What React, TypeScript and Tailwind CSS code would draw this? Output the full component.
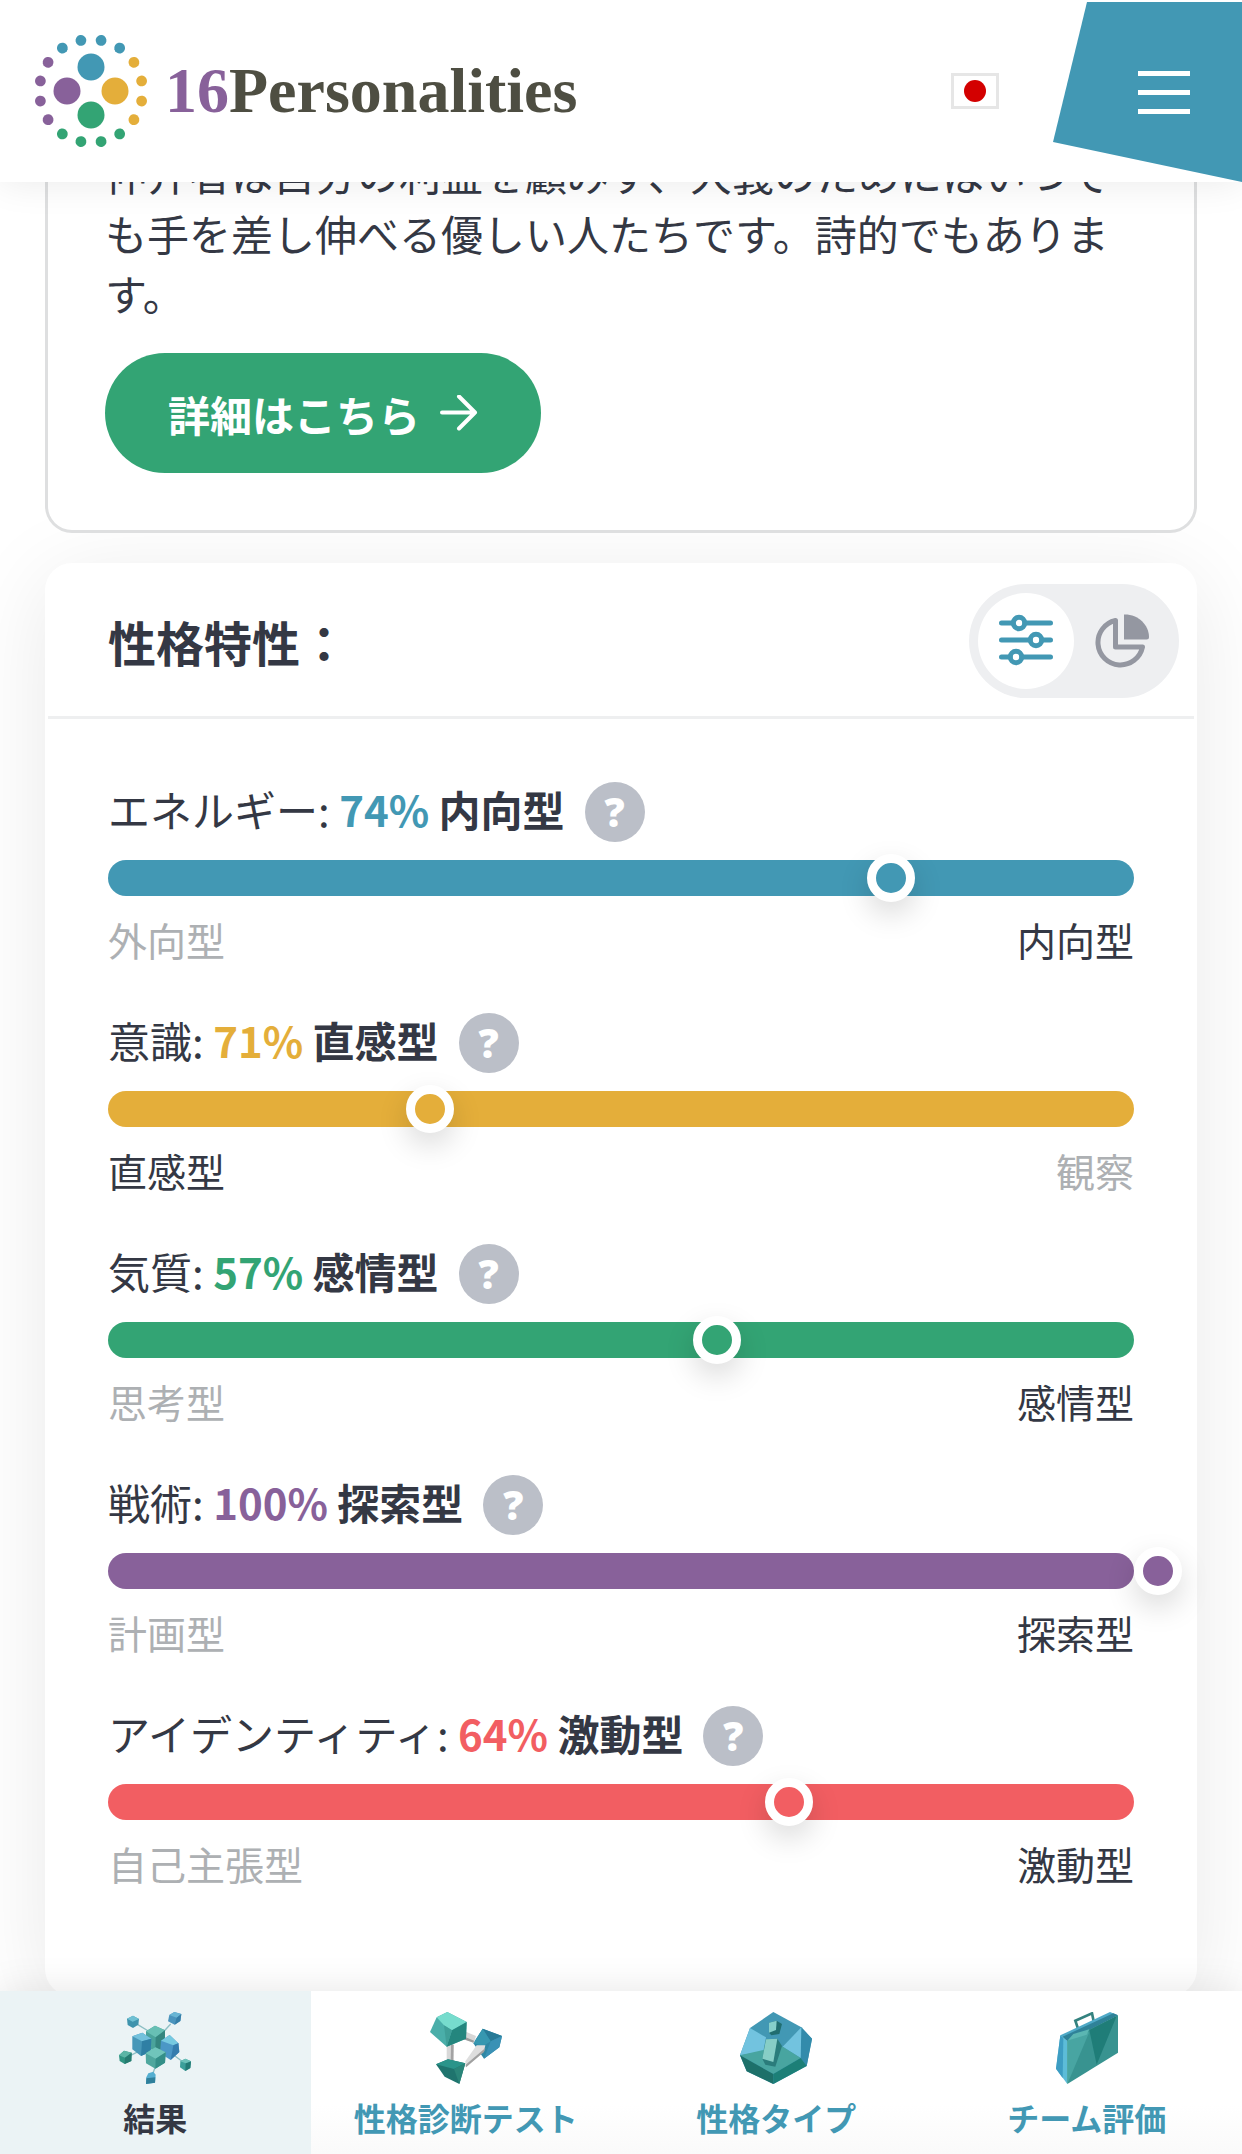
import React, { useState } from "react"
import clsx from "clsx"

type Trait = {
  name: string
  percent: number
  result: string
  left: string
  right: string
  position: number
  fill: string
  text: string
}

const traits: Trait[] = [
  {
    name: "エネルギー",
    percent: 74,
    result: "内向型",
    left: "外向型",
    right: "内向型",
    position: 74,
    fill: "bg-[#4298b4]",
    text: "text-[#4298b4]"
  },
  {
    name: "意識",
    percent: 71,
    result: "直感型",
    left: "直感型",
    right: "観察",
    position: 29,
    fill: "bg-[#e4ae3a]",
    text: "text-[#e4ae3a]"
  },
  {
    name: "気質",
    percent: 57,
    result: "感情型",
    left: "思考型",
    right: "感情型",
    position: 57,
    fill: "bg-[#33a474]",
    text: "text-[#33a474]"
  },
  {
    name: "戦術",
    percent: 100,
    result: "探索型",
    left: "計画型",
    right: "探索型",
    position: 100,
    fill: "bg-[#88619a]",
    text: "text-[#88619a]"
  },
  {
    name: "アイデンティティ",
    percent: 64,
    result: "激動型",
    left: "自己主張型",
    right: "激動型",
    position: 64,
    fill: "bg-[#f25e62]",
    text: "text-[#f25e62]"
  }
]

const LOGO_COLORS = ["#4298b4", "#e4ae3a", "#33a474", "#88619a"]

const LogoMark = () => (
  <svg className="size-[116px] shrink-0" viewBox="-58 -58 116 116" aria-hidden="true">
    {LOGO_COLORS.map((color, i) => (
      <g key={color} fill={color} transform={`rotate(${i * 90})`}>
        <circle cx="0" cy="-24" r="13.5" />
        {[-33.75, -11.25, 11.25, 33.75].map((angle) => (
          <circle key={angle} cx="0" cy="-51.6" r="5.4" transform={`rotate(${angle})`} />
        ))}
      </g>
    ))}
  </svg>
)

const ArrowIcon = () => (
  <svg
    className="h-[37px] w-[38px]"
    viewBox="0 0 38 37"
    fill="none"
    stroke="currentColor"
    strokeWidth="4"
    strokeLinecap="round"
    strokeLinejoin="round"
    aria-hidden="true"
  >
    <path d="M2 17.500H35M19 1.500L35 17.500L19 33.500" />
  </svg>
)

const SlidersIcon = () => (
  <svg
    className="size-[54px]"
    viewBox="0 0 54 54"
    fill="none"
    stroke="currentColor"
    strokeWidth="5"
    strokeLinecap="round"
    aria-hidden="true"
  >
    <path d="M2.5 9H14M26 9H51.5M2.5 26H31M43 26H51.5M2.5 43H11M23 43H51.5" />
    <circle cx="20" cy="9" r="5.7" />
    <circle cx="37" cy="26" r="5.7" />
    <circle cx="17" cy="43" r="5.7" />
  </svg>
)

const PieIcon = () => (
  <svg className="size-[54px]" viewBox="0 0 54 54" aria-hidden="true">
    <path
      d="M20.5 6.500A22.500 22.500 0 1 0 47.500 33H20.500Z"
      fill="none"
      stroke="currentColor"
      strokeWidth="5"
      strokeLinejoin="round"
    />
    <path d="M29 0.5C43 0 54 11 54 23Q54 25.500 51.500 25.500H29Z" fill="currentColor" />
  </svg>
)

const ResultsIcon = () => (
  <svg className="size-[72px]" viewBox="57 36 216 216" aria-hidden="true">
    <g stroke="#8dbfc4" strokeWidth="4">
      <path d="M112 73L150 96M212 72L190 96M92 166L116 154M222 166L246 184M166 200L158 222" />
    </g>
    <path d="M81 56L99 47L117 57L115 74L99 84L83 75Z" fill="#3f93ad" />
    <path d="M81 56L99 47L117 57L98 65Z" fill="#6fc0d3" />
    <path d="M208 45L223 36L244 42L241 63L224 74L204 64Z" fill="#4b94bd" />
    <path d="M208 45L223 36L244 42L230 53Z" fill="#69b5d4" />
    <path d="M230 53L244 42L241 63L224 74Z" fill="#357ea8" />
    <path d="M57 166L72 152L95 158L94 183L74 192L59 183Z" fill="#2f9482" />
    <path d="M57 166L72 152L95 158L75 173Z" fill="#5bb5a5" />
    <path d="M75 173L95 158L94 183L74 192Z" fill="#257b70" />
    <path d="M241 184L256 176L273 184L271 204L256 213L240 202Z" fill="#3c9f9a" />
    <path d="M257 190L273 184L271 204L256 213Z" fill="#237a75" />
    <path d="M241 184L256 176L273 184L257 190Z" fill="#6cc1b9" />
    <path d="M145 220L160 215L167 224L165 248L138 252L139 232Z" fill="#55aed0" />
    <path d="M139 235L166 232L165 248L138 252Z" fill="#2f7f9b" />
    <path d="M138 94L165 77L195 91L194 145L165 154L138 140Z" fill="#4aa39b" />
    <path d="M138 94L165 77L195 91L167 112Z" fill="#67bfb4" />
    <path d="M167 112L195 91L194 145L166 152Z" fill="#34867f" />
    <path d="M97 109L127 98L154 116L152 155L123 168L97 148Z" fill="#4797b8" />
    <path d="M97 109L127 98L154 116L126 124Z" fill="#73c1dc" />
    <path d="M126 124L154 116L152 155L123 168Z" fill="#2f7fa4" />
    <path d="M183 122L209 105L235 130L238 156L212 180L180 160Z" fill="#4b97c6" />
    <path d="M183 122L209 105L235 130L220 136Z" fill="#76c9e0" />
    <path d="M220 136L235 130L238 156L212 180Z" fill="#347cad" />
    <path d="M137 160L166 142L197 157L195 188L166 206L138 190Z" fill="#4fa79e" />
    <path d="M137 160L166 142L197 157L167 176Z" fill="#70c5bb" />
    <path d="M167 176L197 157L195 188L166 206Z" fill="#348f88" />
  </svg>
)

const TestIcon = () => (
  <svg className="size-[72px]" viewBox="990 36 216 216" aria-hidden="true">
    <path d="M1148 86L1206 108L1198 142L1152 176L1120 130Z" fill="#2f87a4" />
    <path d="M1148 86L1206 108L1172 124Z" fill="#277a97" />
    <path d="M1172 124L1206 108L1198 142L1152 176Z" fill="#3a91b5" />
    <path d="M1148 86L1172 124L1150 138L1120 130Z" fill="#3697b0" />
    <path d="M1080 88L1128 108L1122 128L1080 112Z" fill="#d6d6d6" />
    <path d="M1080 104L1122 122L1120 128L1080 114Z" fill="#9c9c9c" />
    <path d="M1040 130L1061 134L1060 194L1040 190Z" fill="#d8d8d8" />
    <path d="M1053 132L1061 134L1060 194L1052 192Z" fill="#a3a3a3" />
    <path d="M1008 193L1044 178L1096 190L1078 252L1034 230Z" fill="#1f746e" />
    <path d="M1008 193L1044 178L1096 190L1062 207Z" fill="#2a948a" />
    <path d="M1062 207L1096 190L1078 252Z" fill="#2a8579" />
    <path d="M1130 136L1156 136L1152 154L1098 202L1096 184Z" fill="#dedede" />
    <path d="M1156 144L1152 156L1098 202L1097 194Z" fill="#a0a0a0" />
    <path d="M1010 52L1042 36L1100 66L1098 116L1040 140L990 96Z" fill="#4aaea9" />
    <path d="M1010 52L1042 36L1100 66L1056 91L1032 76Z" fill="#76dccd" />
    <path d="M1056 91L1100 66L1098 116L1040 140Z" fill="#24867e" />
    <path d="M1032 76L1056 91L1040 140Z" fill="#3f9f98" />
  </svg>
)

const TypesIcon = () => (
  <svg className="size-[72px]" viewBox="60 36 216 216" aria-hidden="true">
    <path d="M160 36L244 82L276 116L260 198L160 252L80 214L60 166L90 84Z" fill="#4298b4" />
    <path d="M244 82L276 116L260 198L242 174Z" fill="#328bab" />
    <path d="M90 84L138 112L130 154L60 166Z" fill="#72c3df" />
    <path d="M244 82L188 140L242 174Z" fill="#72c3df" />
    <path d="M60 166L130 150L188 140L242 174L160 222Z" fill="#48a5a0" />
    <path d="M60 166L160 222V252L80 214Z" fill="#1d7069" />
    <path d="M160 222L242 174L260 198L160 252Z" fill="#1c7f77" />
    <path d="M147 68L170 62L186 72L178 102L154 106L147 98Z" fill="#216e70" />
    <path d="M147 68L170 62L168 90L147 98Z" fill="#86cfca" />
    <path d="M138 118L172 116L186 138L166 200L136 194L127 176Z" fill="#2a7c7b" />
    <path d="M138 118L172 116L160 186L127 176Z" fill="#87cec6" />
  </svg>
)

const TeamIcon = () => (
  <svg className="size-[72px]" viewBox="993 36 216 216" aria-hidden="true">
    <path
      d="M1076 92L1066 62L1116 40L1121 64"
      fill="none"
      stroke="#34827f"
      strokeWidth="8"
    />
    <path d="M1021 106L1170 36L1194 46L1042 124Z" fill="#4fa9c7" />
    <path d="M1028 110L1180 40L1194 46L1042 124Z" fill="#2f8298" />
    <path d="M1021 106L1042 124V252L1008 206Z" fill="#5cbcd8" />
    <path d="M1021 106L1030 114L1028 234L1008 206Z" fill="#3d9dc3" />
    <path d="M1042 122L1194 46V158L1042 252Z" fill="#389390" />
    <path d="M1042 122L1108 96L1042 252Z" fill="#48a5a2" />
    <path d="M1108 90L1190 48L1130 194Z" fill="#1f7d78" />
    <path d="M1042 122L1060 102L1108 88L1100 104Z" fill="#5bb6b2" />
  </svg>
)

const navItems = [
  { label: "結果", icon: <ResultsIcon />, active: true },
  { label: "性格診断テスト", icon: <TestIcon />, active: false },
  { label: "性格タイプ", icon: <TypesIcon />, active: false },
  { label: "チーム評価", icon: <TeamIcon />, active: false }
]

const Header = () => (
  <header className="relative z-20 flex h-[182px] shrink-0 items-center bg-white pl-[33px] shadow-[0_0_36px_rgba(0,0,0,0.09)]">
    <a
      href="#home"
      className="flex items-center gap-4 font-['Liberation_Serif',serif] text-[64px] leading-none font-bold"
    >
      <LogoMark />
      <span>
        <span className="text-[#88619a]">16</span>
        <span className="text-[#4e4e42]">Personalities</span>
      </span>
    </a>
    <button
      type="button"
      aria-label="言語"
      className="mr-[54px] ml-auto flex h-9 w-12 items-center justify-center border-3 border-[#e6e6e6]"
    >
      <span className="size-[22px] rounded-full bg-[#d30000]" />
    </button>
    <button
      type="button"
      aria-label="メニュー"
      className="flex h-[180px] w-[189px] flex-col items-end justify-center gap-[14px] self-end bg-[#4298b4] pr-[52px] [clip-path:polygon(34px_0,100%_0,100%_100%,0_140px)]"
    >
      <span className="h-[5px] w-[52px] bg-white" />
      <span className="h-[5px] w-[52px] bg-white" />
      <span className="h-[5px] w-[52px] bg-white" />
    </button>
  </header>
)

const TraitRow = ({ trait }: { trait: Trait }) => {
  const leftWins = trait.position < 50
  return (
    <li>
      <div className="flex h-[60px] items-center text-[42px]">
        <p className="pb-[6px] leading-[54px]">
          {trait.name}:{" "}
          <strong className={trait.text}>{trait.percent}%</strong>{" "}
          <strong>{trait.result}</strong>
        </p>
        <button
          type="button"
          aria-label={`${trait.name}について`}
          className="ml-5 flex size-[60px] items-center justify-center rounded-full bg-[#bbbfc8] font-['Open_Sans',sans-serif] text-[40px] leading-none font-extrabold text-white"
        >
          ?
        </button>
      </div>
      <div className={clsx("relative mt-[18px] h-9 rounded-full", trait.fill)}>
        <span
          className={clsx(
            "absolute -top-[6px] size-12 rounded-full border-9 border-white shadow-[0_12px_30px_rgba(0,0,0,0.15)]",
            trait.fill
          )}
          style={{ left: `${trait.position}%` }}
        />
      </div>
      <div className="mt-[19px] flex justify-between text-[39px] leading-[48px]">
        <span className={clsx(!leftWins && "text-[#adb0b3]")}>{trait.left}</span>
        <span className={clsx(leftWins && "text-[#adb0b3]")}>{trait.right}</span>
      </div>
    </li>
  )
}

const TraitsCard = () => {
  const [view, setView] = useState("bars")

  const toggleClass = (name: string) =>
    clsx(
      "flex size-24 items-center justify-center rounded-full",
      view === name ? "bg-white text-[#4298b4]" : "text-[#9497a1]"
    )

  return (
    <section className="mt-[30px] shrink-0 rounded-[27px] border-3 border-t-0 border-white bg-white shadow-[0_15px_90px_rgba(0,0,0,0.09)]">
      <div className="flex items-center justify-between border-b-3 border-[#eeeff0] pt-[21px] pr-[15px] pb-[18px] pl-[60px]">
        <h2 className="text-[48px] leading-[60px] font-bold">性格特性：</h2>
        <div className="flex rounded-full bg-[#eeeff1] p-[9px]">
          <button
            type="button"
            aria-label="バー表示"
            aria-pressed={view === "bars"}
            onClick={() => setView("bars")}
            className={toggleClass("bars")}
          >
            <SlidersIcon />
          </button>
          <button
            type="button"
            aria-label="円グラフ表示"
            aria-pressed={view === "pie"}
            onClick={() => setView("pie")}
            className={toggleClass("pie")}
          >
            <PieIcon />
          </button>
        </div>
      </div>
      <ul className="flex flex-col gap-[50px] px-[60px] pt-[63px] pb-[106px]">
        {traits.map((trait) => (
          <TraitRow key={trait.name} trait={trait} />
        ))}
      </ul>
    </section>
  )
}

export default function App() {
  return (
    <div
      lang="ja"
      className="flex h-screen flex-col bg-white font-['Noto_Sans_CJK_JP',sans-serif] text-[#343844]"
    >
      <Header />
      <main className="flex flex-1 flex-col overflow-hidden px-[45px]">
        <section className="relative z-10 -mt-[39px] shrink-0 rounded-b-[27px] border-3 border-t-0 border-[#dedfe0] bg-white px-[57px] pb-[57px]">
          <p className="text-[42px] leading-[60px]">
            仲介者は自分の利益を顧みず、大義のためにはいつでも手を差し伸べる優しい人たちです。詩的でもあります。
          </p>
          <a
            href="#details"
            className="mt-[30px] inline-flex h-[120px] items-center gap-5 rounded-full bg-[#33a474] px-[63px] text-[42px] font-bold text-white"
          >
            詳細はこちら
            <ArrowIcon />
          </a>
        </section>
        <TraitsCard />
      </main>
      <nav className="relative z-20 grid shrink-0 grid-cols-4 bg-linear-to-b from-white from-70% to-[#fafafa] shadow-[0_0_36px_rgba(0,0,0,0.1)]">
        {navItems.map((item) => (
          <a
            key={item.label}
            href="#nav"
            aria-current={item.active ? "page" : undefined}
            className={clsx(
              "flex flex-col items-center gap-[9px] pt-[21px] pb-[13px] text-[32px] leading-[48px] font-bold",
              item.active ? "bg-[#ebf3f5]" : "text-[#4298b4]"
            )}
          >
            {item.icon}
            {item.label}
          </a>
        ))}
      </nav>
    </div>
  )
}
